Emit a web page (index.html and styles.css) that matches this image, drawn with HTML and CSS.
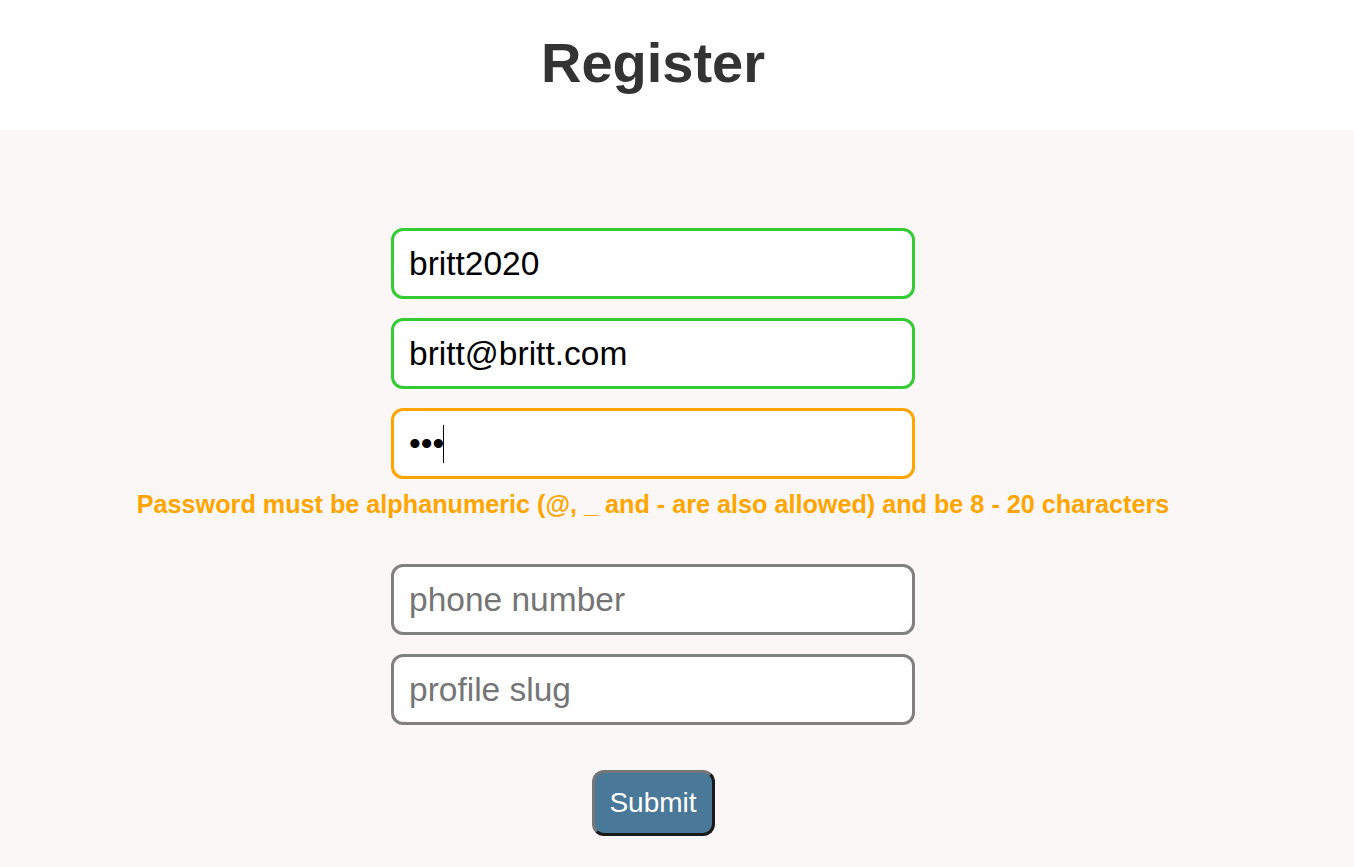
FILE: index.html
```html
<!DOCTYPE html>
<html>
<head>
<meta charset="utf-8">
<link rel="stylesheet" href="styles.css">
</head>
<body>
<header class="header"><h1 class="title">Register</h1></header>
<main class="main">
  <form class="form">
    <input class="field valid" type="text" value="britt2020">
    <input class="field valid" type="text" value="britt@britt.com">
    <div class="pw-wrap">
      <input class="field warn" type="password" value="abc">
      <span class="caret"></span>
    </div>
    <p class="error">Password must be alphanumeric (@, _ and - are also allowed) and be 8 - 20 characters</p>
    <input class="field" type="text" placeholder="phone number">
    <input class="field" type="text" placeholder="profile slug">
    <button class="submit" type="button">Submit</button>
  </form>
</main>
</body>
</html>
```
FILE: styles.css
```css
html, body {
  margin: 0;
  padding: 0;
  font-family: "Liberation Sans", Arial, sans-serif;
}
body {
  background: #fbf7f7;
  min-height: 867px;
}
.header {
  background: #ffffff;
  height: 130px;
  box-sizing: border-box;
  padding-right: 48px;
  display: flex;
  justify-content: center;
  align-items: center;
}
.title {
  margin: 0;
  font-size: 56px;
  font-weight: bold;
  color: #333333;
  padding-bottom: 6px;
}
.main {
  width: 1306px;
  padding-top: 98px;
}
.form {
  display: flex;
  flex-direction: column;
  align-items: center;
  gap: 19px;
}
.field {
  box-sizing: border-box;
  width: 524px;
  height: 71px;
  border: 3px solid #808080;
  border-radius: 12px;
  background: #ffffff;
  padding: 0 15px;
  font-family: "Liberation Sans", Arial, sans-serif;
  font-size: 33.5px;
  color: #000000;
  outline: none;
  margin: 0;
  display: block;
}
.field::placeholder {
  color: #757575;
}
.valid { border-color: #33cc33; }
.warn { border-color: #ffa500; }
.pw-wrap {
  position: relative;
  width: 524px;
  height: 71px;
}
.caret {
  position: absolute;
  left: 52px;
  top: 17px;
  width: 1px;
  height: 38px;
  background: #000;
}
.error {
  margin: -9px 0 26px;
  color: #ffa500;
  font-weight: bold;
  font-size: 25.2px;
  line-height: 30px;
}
.submit {
  margin-top: 26px;
  width: 123px;
  height: 66px;
  border-radius: 12px;
  border: 3px solid #767676;
  border-right-color: #1a1a1a;
  border-bottom-color: #1a1a1a;
  background: #4a7898;
  color: #ffffff;
  font-family: "Liberation Sans", Arial, sans-serif;
  font-size: 28px;
  padding: 0;
}
```
